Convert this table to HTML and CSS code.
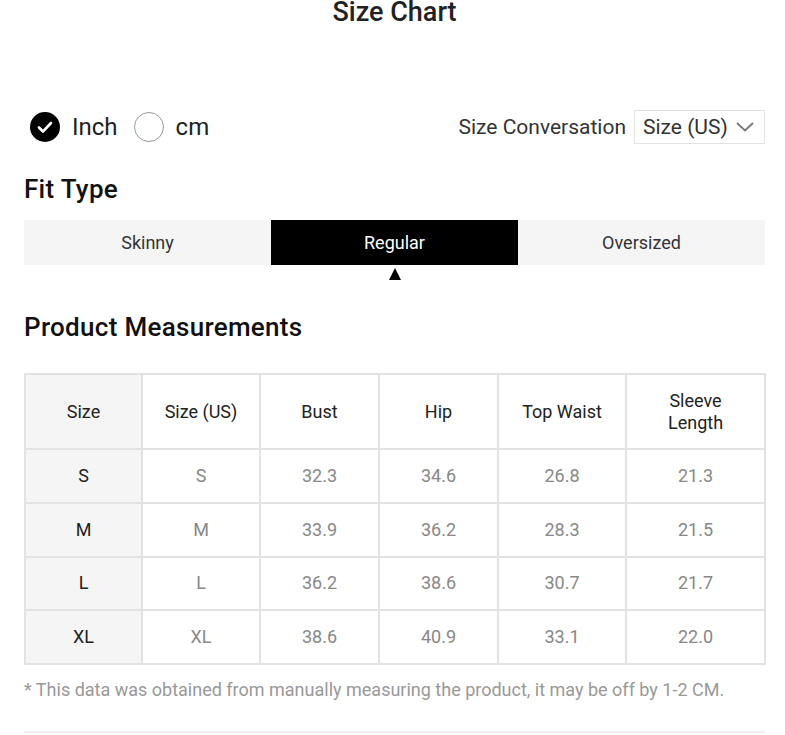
FILE: index.html
```html
<!DOCTYPE html>
<html>
<head>
<meta charset="utf-8">
<link rel="stylesheet" href="styles.css">
</head>
<body>
<div class="page">
  <h1 class="title">Size Chart</h1>

  <div class="unit-row">
    <div class="units">
      <span class="radio checked">
        <svg width="30" height="30" viewBox="0 0 30 30"><circle cx="15" cy="15" r="15" fill="#000"/><path d="M9 15.5l4 4 8-8.5" fill="none" stroke="#fff" stroke-width="2.6" stroke-linecap="round" stroke-linejoin="round"/></svg>
      </span>
      <span class="unit-label">Inch</span>
      <span class="radio empty"></span>
      <span class="unit-label">cm</span>
    </div>
    <div class="conv">
      <span class="conv-label">Size Conversation</span>
      <div class="select">
        <span>Size (US)</span>
        <svg width="20" height="12" viewBox="0 0 20 12"><path d="M2 2l8 7.5L18 2" fill="none" stroke="#777" stroke-width="1.8"/></svg>
      </div>
    </div>
  </div>

  <h2 class="heading fit-heading">Fit Type</h2>
  <div class="tabs">
    <div class="tab">Skinny</div>
    <div class="tab active">Regular</div>
    <div class="tab">Oversized</div>
  </div>

  <h2 class="heading pm-heading">Product Measurements</h2>

  <table class="chart">
    <colgroup>
      <col class="c1"><col class="c2"><col class="c3"><col class="c4"><col class="c5"><col class="c6">
    </colgroup>
    <thead>
      <tr><th class="first">Size</th><th>Size (US)</th><th>Bust</th><th>Hip</th><th>Top Waist</th><th>Sleeve<br>Length</th></tr>
    </thead>
    <tbody>
      <tr><td class="first">S</td><td>S</td><td>32.3</td><td>34.6</td><td>26.8</td><td>21.3</td></tr>
      <tr><td class="first">M</td><td>M</td><td>33.9</td><td>36.2</td><td>28.3</td><td>21.5</td></tr>
      <tr><td class="first">L</td><td>L</td><td>36.2</td><td>38.6</td><td>30.7</td><td>21.7</td></tr>
      <tr><td class="first">XL</td><td>XL</td><td>38.6</td><td>40.9</td><td>33.1</td><td>22.0</td></tr>
    </tbody>
  </table>

  <p class="note">* This data was obtained from manually measuring the product, it may be off by 1-2 CM.</p>
  <div class="divider"></div>
</div>
</body>
</html>
```

FILE: styles.css
```css
* { box-sizing: border-box; }
html, body { margin: 0; padding: 0; background: #fff; }
body { font-family: Roboto, "Liberation Sans", sans-serif; color: #222; overflow: hidden; }

.page { padding: 0 20px 0 24px; }

.title {
  margin: -4px 0 0;
  text-align: center;
  font-size: 27px;
  font-weight: 500;
  line-height: 32px;
  color: #222;
}

.unit-row {
  margin-top: 82px;
  display: flex;
  align-items: center;
  justify-content: space-between;
  height: 34px;
}
.units { display: flex; align-items: center; padding-left: 6px; }
.radio { width: 30px; height: 30px; display: inline-block; border-radius: 50%; flex: none; }
.radio svg { display: block; }
.radio.empty { border: 1px solid #999; margin-left: 16px; }
.unit-label { font-size: 24px; margin-left: 12px; color: #222; }

.conv { display: flex; align-items: center; }
.conv-label { font-size: 21px; color: #333; margin-right: 8px; }
.select {
  display: flex; align-items: center;
  height: 34px; width: 131px;
  border: 1px solid #e3e3e3;
  padding: 0 9px 0 8px;
  justify-content: space-between;
  font-size: 21px; color: #333;
}
.select svg { display: block; }

.heading { margin: 0; font-size: 26px; font-weight: 500; color: #111; line-height: 30px; letter-spacing: 0.3px; }
.fit-heading { margin-top: 30px; }

.tabs { display: flex; margin-top: 16px; height: 45px; position: relative; }
.tab {
  flex: 1;
  display: flex; align-items: center; justify-content: center;
  background: #f5f5f5;
  font-size: 18px; color: #333;
}
.tab.active { background: #000; color: #fff; position: relative; }
.tab.active::after {
  content: "";
  position: absolute;
  left: 50%; top: 48px;
  margin-left: -6px;
  border-left: 6px solid transparent;
  border-right: 6px solid transparent;
  border-bottom: 12px solid #000;
}

.pm-heading { margin-top: 47px; }

.chart {
  margin-top: 31px;
  width: 740px;
  border-collapse: collapse;
  table-layout: fixed;
  border: 2px solid #e2e2e2;
}
.c1 { width: 117px; } .c2 { width: 118px; } .c3 { width: 119px; }
.c4 { width: 119px; } .c5 { width: 128px; } .c6 { width: 139px; }
.chart th, .chart td {
  border: 2px solid #e2e2e2;
  text-align: center;
  font-size: 18px;
  font-weight: 400;
  line-height: 22px;
  padding: 0;
}
.chart th { height: 75px; color: #222; }
.chart td { height: 53.75px; color: #888; }
.chart .first { background: #f5f5f5; color: #222; }

.note { margin: 14px 0 0; font-size: 18px; color: #999; line-height: 22px; }
.divider { margin-top: 30px; height: 2px; background: #eee; }
```
